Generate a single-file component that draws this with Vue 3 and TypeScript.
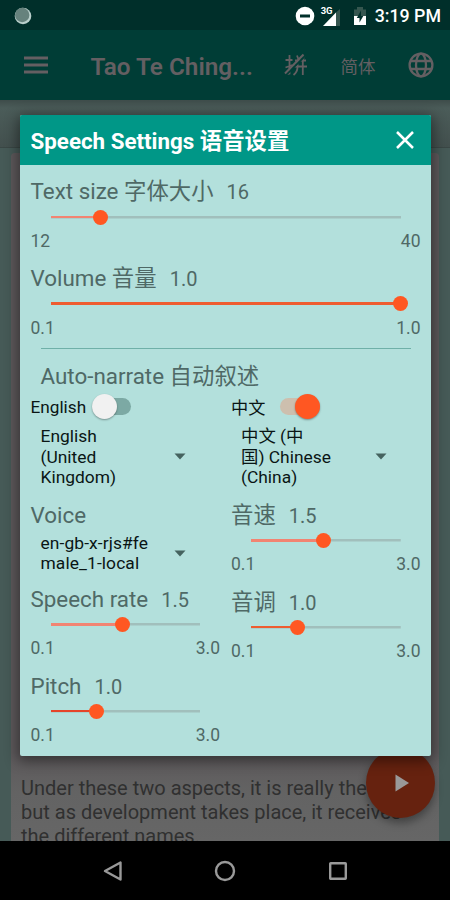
<script setup lang="ts">
interface SliderItem {
  label: string
  value: string
  min: string
  max: string
  percent: number
  tone: string
}

const wide: SliderItem[] = [
  { label: 'Text size 字体大小', value: '16', min: '12', max: '40', percent: 14.3, tone: 'soft' },
  { label: 'Volume 音量', value: '1.0', min: '0.1', max: '1.0', percent: 100, tone: 'full' },
]
const english: SliderItem[] = [
  { label: 'Speech rate', value: '1.5', min: '0.1', max: '3.0', percent: 48.3, tone: 'soft' },
  { label: 'Pitch', value: '1.0', min: '0.1', max: '3.0', percent: 31, tone: 'deep' },
]
const chinese: SliderItem[] = [
  { label: '音速', value: '1.5', min: '0.1', max: '3.0', percent: 48.3, tone: 'soft' },
  { label: '音调', value: '1.0', min: '0.1', max: '3.0', percent: 31, tone: 'full' },
]
</script>

<template>
  <div class="screen">
    <header class="status">
      <svg class="sync" viewBox="0 0 20 20">
        <circle cx="10" cy="10" r="8.3" fill="#b9cfcb" />
        <circle cx="9.2" cy="9" r="7.2" fill="#66827d" />
      </svg>
      <div class="status-right">
        <svg class="dnd" viewBox="0 0 20 20">
          <circle cx="10" cy="10" r="9.3" fill="#fff" />
          <rect x="5" y="8.5" width="10" height="3" fill="#002f2a" />
        </svg>
        <div class="signal">
          <span class="net">3G</span>
          <svg viewBox="0 0 24 22">
            <path d="M18 4.5 22 1V18H18Z" fill="#35564f" />
            <path d="M5 18 18 4.5V18Z" fill="#fff" />
          </svg>
        </div>
        <svg class="battery" viewBox="0 0 14 20">
          <path d="M1 3.5H4V1H10V3.5H13V10H1Z" fill="#35564f" />
          <path d="M1 10H13V19H1Z" fill="#fff" />
          <path d="M8 4.5 3.8 12H6.5V16.5L10.3 10H8Z" fill="#002f2a" />
        </svg>
        <span class="clock">3:19 PM</span>
      </div>
    </header>

    <div class="appbar">
      <svg class="menu" viewBox="0 0 24 18">
        <path d="M0 2H24M0 9H24M0 16H24" stroke="#645f62" stroke-width="3" />
      </svg>
      <span class="title">Tao Te Ching...</span>
      <svg class="pinyin" viewBox="0 0 24 24">
        <g fill="none" stroke="#645f62" stroke-width="1.8">
          <path d="M1.5 7H8.5M5.5 2V20.5L3 21M1.5 14.5 8.5 12M11 7.5H22M10 13.5H23M13.5 8V14Q13.5 19 9.5 22M18.8 8V22M13 2.5 14.5 6.5M20.5 3 18.5 7" />
          <path d="M2.5 21.5 21 3" stroke="#003d36" />
          <path d="M1 20.5 19.5 1.5" stroke-width="2" />
        </g>
      </svg>
      <span class="script">简体</span>
      <svg class="globe" viewBox="0 0 26 26">
        <g fill="none" stroke="#645f62" stroke-width="2.3">
          <circle cx="13" cy="13" r="11.4" />
          <ellipse cx="13" cy="13" rx="5" ry="11.4" />
          <path d="M2.5 9H23.5M2.5 17H23.5" />
        </g>
      </svg>
    </div>

    <div class="strip"></div>

    <main class="page">
      <div class="card">
        <p>Under these two aspects, it is really the same;<br />but as development takes place, it receives<br />the different names.</p>
      </div>
    </main>

    <div class="fab">
      <svg viewBox="0 0 14 18"><path d="M0.5 0.5 14 9 0.5 17.5Z" fill="#999" /></svg>
    </div>

    <footer class="nav">
      <svg viewBox="0 0 22 22"><path d="M18.5 2.5V19.5L3 11Z" fill="none" stroke="#999" stroke-width="2.4" stroke-linejoin="round" /></svg>
      <svg viewBox="0 0 22 22"><circle cx="11" cy="11" r="9" fill="none" stroke="#999" stroke-width="2.4" /></svg>
      <svg viewBox="0 0 22 22"><rect x="3.2" y="3.2" width="15.6" height="15.6" rx="0.5" fill="none" stroke="#999" stroke-width="2.4" /></svg>
    </footer>

    <section class="dialog">
      <div class="dialog-head">
        <h2>Speech Settings 语音设置</h2>
        <svg viewBox="0 0 18 18"><path d="M1 1 17 17M17 1 1 17" stroke="#fff" stroke-width="2.5" /></svg>
      </div>
      <div class="body">
        <div v-for="s in wide" :key="s.label" class="slider wide">
          <div class="label">{{ s.label }}<span class="value">{{ s.value }}</span></div>
          <div class="track">
            <div class="fill" :class="s.tone" :style="{ width: s.percent + '%' }"></div>
            <div class="knob"></div>
          </div>
          <div class="range"><span>{{ s.min }}</span><span>{{ s.max }}</span></div>
        </div>
        <hr />
        <div class="label narrate">Auto-narrate 自动叙述</div>
        <div class="columns">
          <div class="column">
            <div class="toggle-row">
              <span class="toggle-label">English</span>
              <div class="toggle"><i></i></div>
            </div>
            <div class="select">
              <span>English<br />(United<br />Kingdom)</span>
              <svg viewBox="0 0 12 7"><path d="M0.5 0.5H11.5L6 6.5Z" fill="#45635f" /></svg>
            </div>
            <div class="label voice">Voice</div>
            <div class="select short">
              <span>en-gb-x-rjs#fe<br />male_1-local</span>
              <svg viewBox="0 0 12 7"><path d="M0.5 0.5H11.5L6 6.5Z" fill="#45635f" /></svg>
            </div>
            <div v-for="s in english" :key="s.label" class="slider">
              <div class="label">{{ s.label }}<span class="value">{{ s.value }}</span></div>
              <div class="track">
                <div class="fill" :class="s.tone" :style="{ width: s.percent + '%' }"></div>
                <div class="knob"></div>
              </div>
              <div class="range"><span>{{ s.min }}</span><span>{{ s.max }}</span></div>
            </div>
          </div>
          <div class="column">
            <div class="toggle-row">
              <span class="toggle-label">中文</span>
              <div class="toggle on"><i></i></div>
            </div>
            <div class="select">
              <span>中文 (中<br />国) Chinese<br />(China)</span>
              <svg viewBox="0 0 12 7"><path d="M0.5 0.5H11.5L6 6.5Z" fill="#45635f" /></svg>
            </div>
            <div v-for="s in chinese" :key="s.label" class="slider">
              <div class="label">{{ s.label }}<span class="value">{{ s.value }}</span></div>
              <div class="track">
                <div class="fill" :class="s.tone" :style="{ width: s.percent + '%' }"></div>
                <div class="knob"></div>
              </div>
              <div class="range"><span>{{ s.min }}</span><span>{{ s.max }}</span></div>
            </div>
          </div>
        </div>
      </div>
    </section>
  </div>
</template>

<style>
body {
  margin: 0;
  background: #000;
}
</style>

<style scoped>
.screen {
  position: relative;
  display: flex;
  flex-direction: column;
  width: 450px;
  height: 900px;
  overflow: hidden;
  background: #465a57;
  font-family: Roboto, 'Noto Sans CJK SC', sans-serif;
}
svg {
  display: block;
  flex: none;
}
.status {
  display: flex;
  align-items: center;
  justify-content: space-between;
  box-sizing: border-box;
  height: 30px;
  padding: 1px 9px 0 13px;
  background: #002f2a;
}
.sync {
  width: 20px;
  height: 20px;
}
.status-right {
  display: flex;
  align-items: center;
}
.dnd {
  width: 20px;
  height: 20px;
  margin-right: 6px;
}
.signal {
  position: relative;
  width: 24px;
  height: 22px;
  margin-right: 8px;
}
.signal svg {
  width: 24px;
  height: 22px;
  margin: 3px 0 0 -3px;
}
.net {
  position: absolute;
  left: 0;
  top: 0;
  color: #fff;
  font-size: 9.5px;
  line-height: 11px;
  font-weight: 700;
}
.battery {
  width: 14px;
  height: 20px;
  margin-right: 8px;
}
.clock {
  color: #fff;
  font-size: 17.8px;
  font-weight: 500;
  line-height: 28px;
}
.appbar {
  display: flex;
  align-items: center;
  height: 70px;
  background: #003d36;
  color: #645f62;
}
.menu {
  width: 24px;
  height: 18px;
  margin: 0 43px 0 23.5px;
}
.title {
  width: 193px;
  padding-top: 2px;
  font-size: 24.3px;
  font-weight: 600;
}
.pinyin {
  width: 24px;
  height: 24px;
}
.script {
  width: 66px;
  margin-left: 33px;
  font-size: 17.5px;
}
.globe {
  width: 26px;
  height: 26px;
  margin-left: 1px;
}
.strip {
  height: 47px;
  background: linear-gradient(#3e4c4a, #4b5c59 8px, #43504e);
  border-bottom: 1px solid #3a4745;
}
.page {
  display: flex;
  height: 693px;
  padding: 5px 11px 0;
  box-sizing: border-box;
  background: #465a57;
}
.card {
  display: flex;
  flex: 1;
  align-items: flex-end;
  overflow: hidden;
  border-radius: 4px 4px 0 0;
  background: linear-gradient(#5d595b, #5d595b 600px, #636363 640px, #666);
}
.card p {
  margin: 0 0 -7px;
  padding-left: 10px;
  color: #303030;
  font-size: 20px;
  line-height: 24px;
  white-space: nowrap;
}
.fab {
  position: absolute;
  left: 366px;
  top: 748px;
  display: flex;
  align-items: center;
  justify-content: center;
  width: 69px;
  height: 70px;
  border-radius: 50%;
  background: #66220f;
  box-shadow: 0 5px 8px rgba(0, 0, 0, 0.35);
}
.fab svg {
  width: 14px;
  height: 18px;
  margin-left: 2px;
}
.nav {
  display: flex;
  align-items: center;
  justify-content: center;
  gap: 90.5px;
  height: 59px;
  background: #000;
}
.nav svg {
  width: 22px;
  height: 22px;
}
.dialog {
  position: absolute;
  left: 20px;
  top: 115px;
  width: 411px;
  height: 641px;
  border-radius: 2px;
  background: #b3e0dc;
  box-shadow: 0 3px 14px 2px rgba(0, 0, 0, 0.45);
}
.dialog-head {
  display: flex;
  align-items: center;
  justify-content: space-between;
  height: 50px;
  padding: 0 17px 0 10.5px;
  border-radius: 2px 2px 0 0;
  background: #009787;
}
.dialog-head h2 {
  margin: 0;
  padding-top: 1px;
  color: #fff;
  font-size: 22.35px;
  font-weight: 700;
  line-height: 50px;
}
.dialog-head svg {
  width: 18px;
  height: 18px;
}
.body {
  padding: 5px 10.5px 0;
}
.slider {
  height: 86.7px;
}
.label {
  height: 33px;
  padding-top: 5px;
  color: #4f6966;
  font-size: 22.4px;
  line-height: 34px;
  white-space: nowrap;
}
.wide .label {
  height: 34px;
  padding-top: 4px;
}
.value {
  margin-left: 13px;
  font-size: 20px;
}
.track {
  display: flex;
  align-items: center;
  height: 18px;
  margin: 0 20px;
  background: linear-gradient(#a1bfbc, #a1bfbc) center / 100% 2.5px no-repeat;
}
.fill {
  height: 2.5px;
}
.soft {
  background: #f28472;
}
.full {
  background: #ee5c30;
}
.deep {
  background: #e5442a;
}
.knob {
  flex: none;
  width: 15px;
  height: 15px;
  margin: 0 -7.5px;
  border-radius: 50%;
  background: #ff5722;
}
.range {
  display: flex;
  justify-content: space-between;
  color: #4f6966;
  font-size: 17.5px;
  line-height: 30.7px;
}
hr {
  height: 1px;
  margin: 5px 10px 0;
  border: 0;
  background: #6fb0a8;
}
.narrate {
  height: 32px;
  padding: 10px 0 0 10px;
}
.columns {
  display: flex;
  gap: 11px;
}
.column {
  flex: 1;
  min-width: 0;
}
.toggle-row {
  display: flex;
  align-items: center;
  height: 31px;
  color: #0a1514;
  font-size: 17.2px;
}
.toggle-label {
  width: 61px;
}
.column + .column .toggle-label {
  width: 49px;
}
.toggle {
  display: flex;
  align-items: center;
  width: 39px;
  height: 17px;
  border-radius: 9px;
  background: #7ca9a4;
}
.toggle i {
  width: 25px;
  height: 25px;
  border-radius: 50%;
  background: #f1f1f1;
  box-shadow: 0 1px 2px rgba(0, 0, 0, 0.35);
}
.toggle.on {
  width: 40px;
  justify-content: flex-end;
  background: #cdbfae;
}
.toggle.on i {
  background: #ff5722;
}
.select {
  display: flex;
  align-items: center;
  justify-content: space-between;
  height: 69px;
  padding: 0 34px 2px 10px;
  color: #0a1514;
  font-size: 17.4px;
  line-height: 20.5px;
  white-space: nowrap;
}
.select svg {
  width: 12px;
  height: 7px;
}
.voice {
  height: 30.5px;
}
.select.short {
  height: 48.5px;
  padding-bottom: 0;
  letter-spacing: 0.1px;
}
</style>
